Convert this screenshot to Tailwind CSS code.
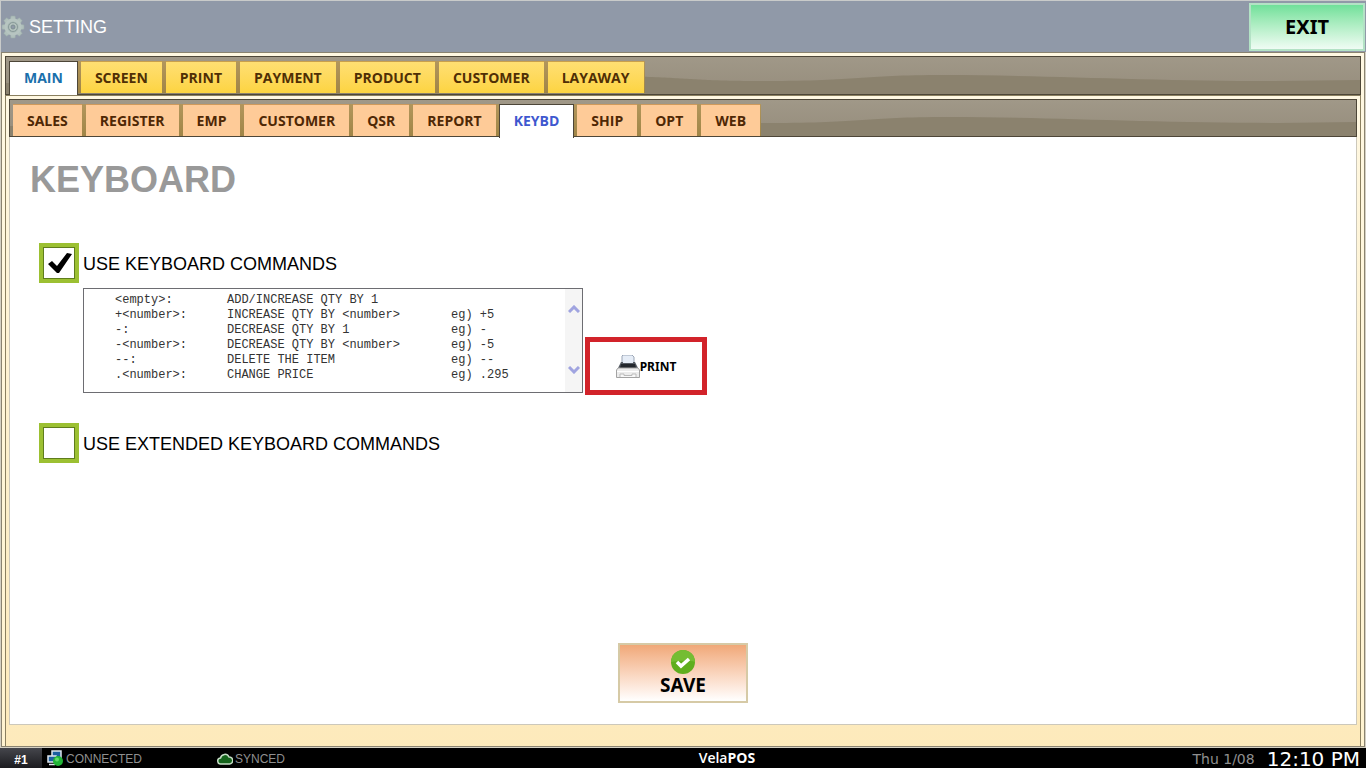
<!DOCTYPE html>
<html lang="en">
<head>
    <meta charset="UTF-8">
    <meta name="viewport" content="width=device-width, initial-scale=1.0">
    <title>VelaPOS | Setting</title>
    <script src="https://cdn.jsdelivr.net/npm/@tailwindcss/browser@4"></script>
</head>
<body class="min-h-screen flex flex-col bg-[#d4d0c3] font-['Liberation_Sans',sans-serif] text-black">

    <!-- Header -->
    <header class="h-13 shrink-0 flex items-center justify-between bg-[#9099a8] border-t border-l border-[#c9cbca]">
        <div class="flex items-center gap-1">
            <svg class="size-6" viewBox="0 0 24 24" aria-hidden="true">
                <g fill="#b1c0bc" stroke="#9aaba9" stroke-width=".6">
                    <path d="M10 1h4l1 5H9z M10 23h4l1-5H9z M1 10v4l5 1V9z M23 10v4l-5 1V9z" />
                    <path d="M10 1h4l1 5H9z M10 23h4l1-5H9z M1 10v4l5 1V9z M23 10v4l-5 1V9z" transform="rotate(45 12 12)" />
                </g>
                <circle cx="12" cy="12" r="7" fill="#a3b4b0" stroke="#b7c5c1" stroke-width="3" />
                <circle cx="12" cy="12" r="4.5" fill="#b4c2be" stroke="#8b9c9b" />
                <circle cx="12" cy="12" r="2" fill="#9099a8" stroke="#7d8f92" />
            </svg>
            <h1 class="text-lg text-white">SETTING</h1>
        </div>
        <button type="button" class="w-29 h-12 mr-px border-2 border-[#b3e2c5] bg-linear-to-b from-[#6fe09a] to-[#effcf4] font-['Noto_Sans',sans-serif] text-xl font-bold leading-none">EXIT</button>
    </header>

    <!-- Settings panel -->
    <div class="grow flex flex-col mx-px mb-px border border-[#8a8370] bg-linear-to-b from-[#fff8e2] to-[#fff3d0] px-[3px] pt-[3px]">

        <!-- Main tabs -->
        <nav aria-label="Settings" class="relative h-[39px] shrink-0 border border-[#4d4638] bg-linear-to-b from-[#a09888] to-[#968d7c] pl-[3px] pt-1">
            <svg class="absolute inset-0 size-full" viewBox="0 0 1356 37" preserveAspectRatio="none" aria-hidden="true">
                <path d="M0 26C200 26 300 18 500 18S660 24 760 24S850 18 940 18S1150 24 1270 24L1356 23V37H0z" fill="#8b826e" />
            </svg>
            <div class="relative flex font-['Open_Sans',sans-serif] text-sm leading-8 font-bold text-[#4f2f05]">
                <a href="#main" class="h-[34px] px-3.5 border-x border-t border-[#4d4638] bg-white text-[#1a70ac]">MAIN</a>
                <div class="h-8 flex gap-1 pl-[3px] bg-linear-to-b from-[#b2965c] to-[#a08546] pr-px">
                    <a href="#screen" class="px-3.5 border-t border-[#c9a04c] bg-linear-to-b from-[#ffdf72] to-[#fdd440]">SCREEN</a>
                    <a href="#print" class="px-3.5 border-t border-[#c9a04c] bg-linear-to-b from-[#ffdf72] to-[#fdd440]">PRINT</a>
                    <a href="#payment" class="px-3.5 border-t border-[#c9a04c] bg-linear-to-b from-[#ffdf72] to-[#fdd440]">PAYMENT</a>
                    <a href="#product" class="px-3.5 border-t border-[#c9a04c] bg-linear-to-b from-[#ffdf72] to-[#fdd440]">PRODUCT</a>
                    <a href="#customer" class="px-3.5 border-t border-[#c9a04c] bg-linear-to-b from-[#ffdf72] to-[#fdd440]">CUSTOMER</a>
                    <a href="#layaway" class="px-3.5 border-t border-[#c9a04c] bg-linear-to-b from-[#ffdf72] to-[#fdd440]">LAYAWAY</a>
                </div>
            </div>
        </nav>

        <div class="grow flex flex-col border-t border-x border-[#8a7f5f] bg-[#fdeabb]">
            <div class="grow flex flex-col bg-linear-to-b from-[#fff8e2] to-[#fdeabb] px-[3px] pt-[3px]">

                <!-- Sub tabs -->
                <nav aria-label="Main settings" class="relative h-[38px] shrink-0 border border-[#4d4638] bg-linear-to-b from-[#a09888] to-[#968d7c] pl-[3px] pt-1">
                    <svg class="absolute inset-0 size-full" viewBox="0 0 1348 36" preserveAspectRatio="none" aria-hidden="true">
                        <path d="M0 26C200 26 300 18 500 18S660 23 760 23S850 17 940 17S1150 23 1270 23L1348 22V36H0z" fill="#8b826e" />
                    </svg>
                    <div class="relative flex font-['Open_Sans',sans-serif] text-sm leading-8 font-bold text-[#4f2805]">
                        <div class="h-8 flex gap-1 pr-[3px] bg-linear-to-b from-[#b2965c] to-[#a08546]">
                            <a href="#sales" class="px-3.5 border-t border-[#cf9a5c] bg-[#fecb98]">SALES</a>
                            <a href="#register" class="px-3.5 border-t border-[#cf9a5c] bg-[#fecb98]">REGISTER</a>
                            <a href="#emp" class="px-3.5 border-t border-[#cf9a5c] bg-[#fecb98]">EMP</a>
                            <a href="#sub-customer" class="px-3.5 border-t border-[#cf9a5c] bg-[#fecb98]">CUSTOMER</a>
                            <a href="#qsr" class="px-3.5 border-t border-[#cf9a5c] bg-[#fecb98]">QSR</a>
                            <a href="#report" class="px-3.5 border-t border-[#cf9a5c] bg-[#fecb98]">REPORT</a>
                        </div>
                        <a href="#keybd" class="h-[34px] px-3.5 border-x border-t border-[#4d4638] bg-white text-[#3f58cf]">KEYBD</a>
                        <div class="h-8 flex gap-1 pl-[3px] bg-linear-to-b from-[#b2965c] to-[#a08546] pr-px">
                            <a href="#ship" class="px-3.5 border-t border-[#cf9a5c] bg-[#fecb98]">SHIP</a>
                            <a href="#opt" class="px-3.5 border-t border-[#cf9a5c] bg-[#fecb98]">OPT</a>
                            <a href="#web" class="px-3.5 border-t border-[#cf9a5c] bg-[#fecb98]">WEB</a>
                        </div>
                    </div>
                </nav>

                <!-- Keyboard settings -->
                <main class="grow flex flex-col border-x border-b border-[#ccc8bb] bg-white px-5 pt-[21px] pb-[21px]">
                    <h2 class="text-4xl font-bold leading-11 text-[#999]">KEYBOARD</h2>

                    <form id="keyboard-form" class="grow flex flex-col pt-[41px] pl-[9px]">
                        <div class="flex items-center gap-1">
                            <span class="relative size-10">
                                <input id="use-commands" type="checkbox" checked class="peer block size-10 appearance-none border-4 border-[#9cc032] bg-white outline outline-[#5f7d1c] -outline-offset-5">
                                <svg class="absolute inset-0 size-10 pointer-events-none hidden peer-checked:block" viewBox="0 0 40 40" aria-hidden="true">
                                    <path d="M9 21l4-3 5 5L28 10l5 1L20 30h-2z" fill="#000" />
                                </svg>
                            </span>
                            <label for="use-commands" class="text-lg pt-0.5">USE KEYBOARD COMMANDS</label>
                        </div>

                        <div class="flex items-end gap-0.5 pl-11 pt-[5px]">
                            <div class="flex w-[500px] h-[105px] mb-0.5 border border-[#6d6d72]">
                                <div class="grow pl-[31px] pt-1 overflow-hidden">
                                    <table class="font-['Liberation_Mono',monospace] text-xs leading-[15px] text-[#333] whitespace-pre">
                                        <tbody>
                                            <tr><td class="w-28 p-0">&lt;empty&gt;:</td><td class="w-56 p-0">ADD/INCREASE QTY BY 1</td><td class="p-0"></td></tr>
                                            <tr><td class="p-0">+&lt;number&gt;:</td><td class="p-0">INCREASE QTY BY &lt;number&gt;</td><td class="p-0">eg) +5</td></tr>
                                            <tr><td class="p-0">-:</td><td class="p-0">DECREASE QTY BY 1</td><td class="p-0">eg) -</td></tr>
                                            <tr><td class="p-0">-&lt;number&gt;:</td><td class="p-0">DECREASE QTY BY &lt;number&gt;</td><td class="p-0">eg) -5</td></tr>
                                            <tr><td class="p-0">--:</td><td class="p-0">DELETE THE ITEM</td><td class="p-0">eg) --</td></tr>
                                            <tr><td class="p-0">.&lt;number&gt;:</td><td class="p-0">CHANGE PRICE</td><td class="p-0">eg) .295</td></tr>
                                        </tbody>
                                    </table>
                                </div>
                                <div class="w-[17px] flex flex-col justify-between items-center bg-[#f5f5f5] pt-4 pb-[18px]">
                                    <button type="button" aria-label="Scroll up" class="block">
                                        <svg class="w-3 h-2" viewBox="0 0 12 8" fill="none" stroke="#a0a4e0" stroke-width="3"><path d="M1 7l5-5 5 5" /></svg>
                                    </button>
                                    <button type="button" aria-label="Scroll down" class="block">
                                        <svg class="w-3 h-2" viewBox="0 0 12 8" fill="none" stroke="#a0a4e0" stroke-width="3"><path d="M1 1l5 5 5-5" /></svg>
                                    </button>
                                </div>
                            </div>
                            <button type="button" class="flex items-center justify-center w-[122px] h-[58px] border-5 border-[#d2232a] bg-white pt-0.5 font-['Noto_Sans',sans-serif] text-xs font-bold">
                                <svg class="size-6" viewBox="0 0 24 24" aria-hidden="true">
                                    <path d="M6 1l1-1h9l2 2v8H6z" fill="#e6edf7" stroke="#9aa5b5" />
                                    <path d="M5 7h14l3 6H2z" fill="#555b63" />
                                    <path d="M7 3h10v5H7z" fill="#e6edf7" />
                                    <path d="M5 9h14l1 4H4z" fill="#23272d" />
                                    <path d="M2 13h20l1.500 2v7.500h-23V15z" fill="#ececec" stroke="#a3a3a3" />
                                    <path d="M1 16.500h22" stroke="#fff" />
                                    <path d="M4 22v-3h4v1.500h8V19h4v3" fill="#f8f8f8" stroke="#bbb" />
                                </svg>
                                PRINT
                            </button>
                        </div>

                        <div class="flex items-center gap-1 pt-7">
                            <span class="relative size-10">
                                <input id="use-extended" type="checkbox" class="peer block size-10 appearance-none border-4 border-[#9cc032] bg-white outline outline-[#5f7d1c] -outline-offset-5">
                                <svg class="absolute inset-0 size-10 pointer-events-none hidden peer-checked:block" viewBox="0 0 40 40" aria-hidden="true">
                                    <path d="M9 21l4-3 5 5L28 10l5 1L20 30h-2z" fill="#000" />
                                </svg>
                            </span>
                            <label for="use-extended" class="text-lg pt-0.5">USE EXTENDED KEYBOARD COMMANDS</label>
                        </div>
                    </form>

                    <button type="submit" form="keyboard-form" class="self-center flex flex-col items-center w-[130px] h-[60px] border-2 border-[#d6caa6] bg-linear-to-b from-[#f0a878] to-white pt-[5px] font-['Noto_Sans',sans-serif] text-[19px] leading-[22px] font-bold">
                        <svg class="size-6 shrink-0" viewBox="0 0 24 24" aria-hidden="true">
                            <circle cx="12" cy="12" r="12" fill="#5fae1e" />
                            <path d="M0 12a12 12 0 0 1 24 0C18 10 7 11 0 12z" fill="#74bd33" />
                            <path d="M6 12l4 4 8-7" fill="none" stroke="#fff" stroke-width="3.500" />
                        </svg>
                        SAVE
                    </button>
                </main>
                <div class="h-[21px] shrink-0"></div>
            </div>
        </div>
    </div>

    <!-- Status bar -->
    <footer class="h-5 shrink-0 flex items-center bg-black text-xs leading-5 text-[#8f8f8f]">
        <div class="basis-[51%] flex items-center">
            <span class="w-[42px] h-5 bg-linear-to-b from-[#45464c] to-[#1c1c20] text-center font-bold text-white pt-0.5">#1</span>
            <svg class="size-4 ml-[5px] mr-[3px]" viewBox="0 0 16 16" aria-hidden="true">
                <path d="M5 1h9v7H5z" fill="#1d5fa0" stroke="#dfe7ee" stroke-width="1.500" />
                <path d="M1 6h8v6H1z" fill="#1d5fa0" stroke="#dfe7ee" stroke-width="1.500" />
                <path d="M2 14.500h6" stroke="#dfe7ee" stroke-width="1.500" />
                <circle cx="11" cy="11" r="5" fill="#22b537" />
                <circle cx="10" cy="9.500" r="2" fill="#5fdc6b" />
            </svg>
            <span class="w-[151px] pt-0.5">CONNECTED</span>
            <svg class="size-4 mr-0.5" viewBox="0 0 16 16" aria-hidden="true">
                <path d="M4 14a3 3 0 0 1-.5-6A4.500 4.500 0 0 1 12 7a3.500 3.500 0 0 1 .5 7z" fill="#15641c" stroke="#c5dcc5" stroke-width="1.500" />
            </svg>
            <span class="pt-0.5">SYNCED</span>
        </div>
        <div class="pl-0.5 font-['Open_Sans',sans-serif] text-sm leading-5 text-white font-semibold">Vela<b class="font-bold">POS</b></div>
        <div class="ml-auto flex items-center gap-3 pr-1.5 font-['DejaVu_Sans',sans-serif]">
            <span class="text-sm leading-[18px] pt-0.5">Thu 1/08</span>
            <time class="text-xl leading-[18px] text-white pt-0.5">12:10 PM</time>
        </div>
    </footer>
</body>
</html>
